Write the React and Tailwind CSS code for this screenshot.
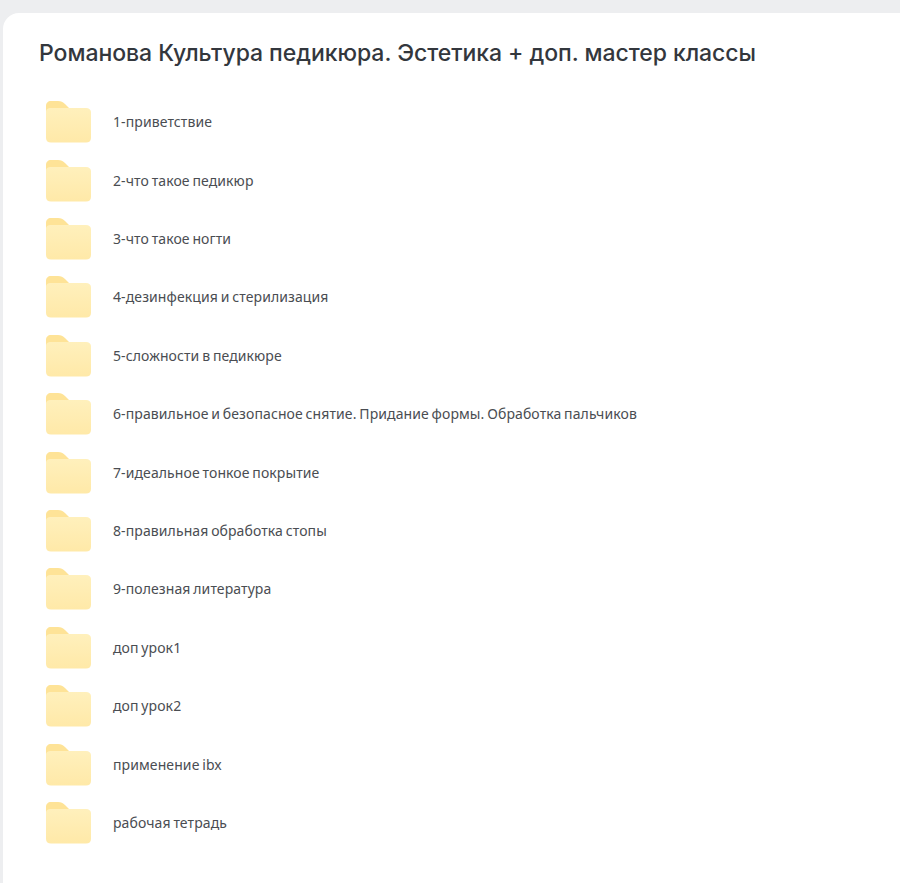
import { useId } from "react";

const FOLDERS = [
  "1-приветствие",
  "2-что такое педикюр",
  "3-что такое ногти",
  "4-дезинфекция и стерилизация",
  "5-сложности в педикюре",
  "6-правильное и безопасное снятие. Придание формы. Обработка пальчиков",
  "7-идеальное тонкое покрытие",
  "8-правильная обработка стопы",
  "9-полезная литература",
  "доп урок1",
  "доп урок2",
  "применение ibx",
  "рабочая тетрадь",
];

function FolderIcon() {
  const id = useId();
  return (
    <svg width="46" height="42" viewBox="0 0 46 42" fill="none" aria-hidden="true" className="shrink-0">
      <defs>
        <linearGradient id={id} x1="0" y1="0" x2="0" y2="1">
          <stop offset="0" stopColor="#FFF0BC" />
          <stop offset="1" stopColor="#FFE9A8" />
        </linearGradient>
      </defs>
      <path
        d="M0 5C0 2 2 0 5 0H12C15 0 17 1 19 3L23 7H20V20H0Z"
        fill="#FEE397"
      />
      <path
        d="M0 11C0 8 2 7 5 7H40C43 7 45 9 45 11V37C45 40 43 41.500 40 41.500H5C2 41.500 0 40 0 37Z"
        fill={`url(#${id})`}
      />
    </svg>
  );
}

export default function App() {
  return (
    <div className="min-h-[883px] bg-[#edeef0] pt-[13px] pl-[3px] font-['Noto_Sans','Open_Sans',sans-serif]">
      <div className="h-[870px] rounded-tl-[16px] bg-white pt-[25px] pl-[36px]">
        <h1 className="font-['Inter',sans-serif] text-[23px] leading-[30px] font-medium tracking-[-0.05px] text-[#33373d]">
          Романова Культура педикюра. Эстетика + доп. мастер классы
        </h1>
        <ul className="mt-[25px] pl-[7px]">
          {FOLDERS.map((name) => (
            <li key={name} className="flex h-[58.42px] items-center gap-[21px]">
              <FolderIcon />
              <span className="text-sm tracking-[0.1px] [word-spacing:-1px] text-[#4a4d52]">{name}</span>
            </li>
          ))}
        </ul>
      </div>
    </div>
  );
}
